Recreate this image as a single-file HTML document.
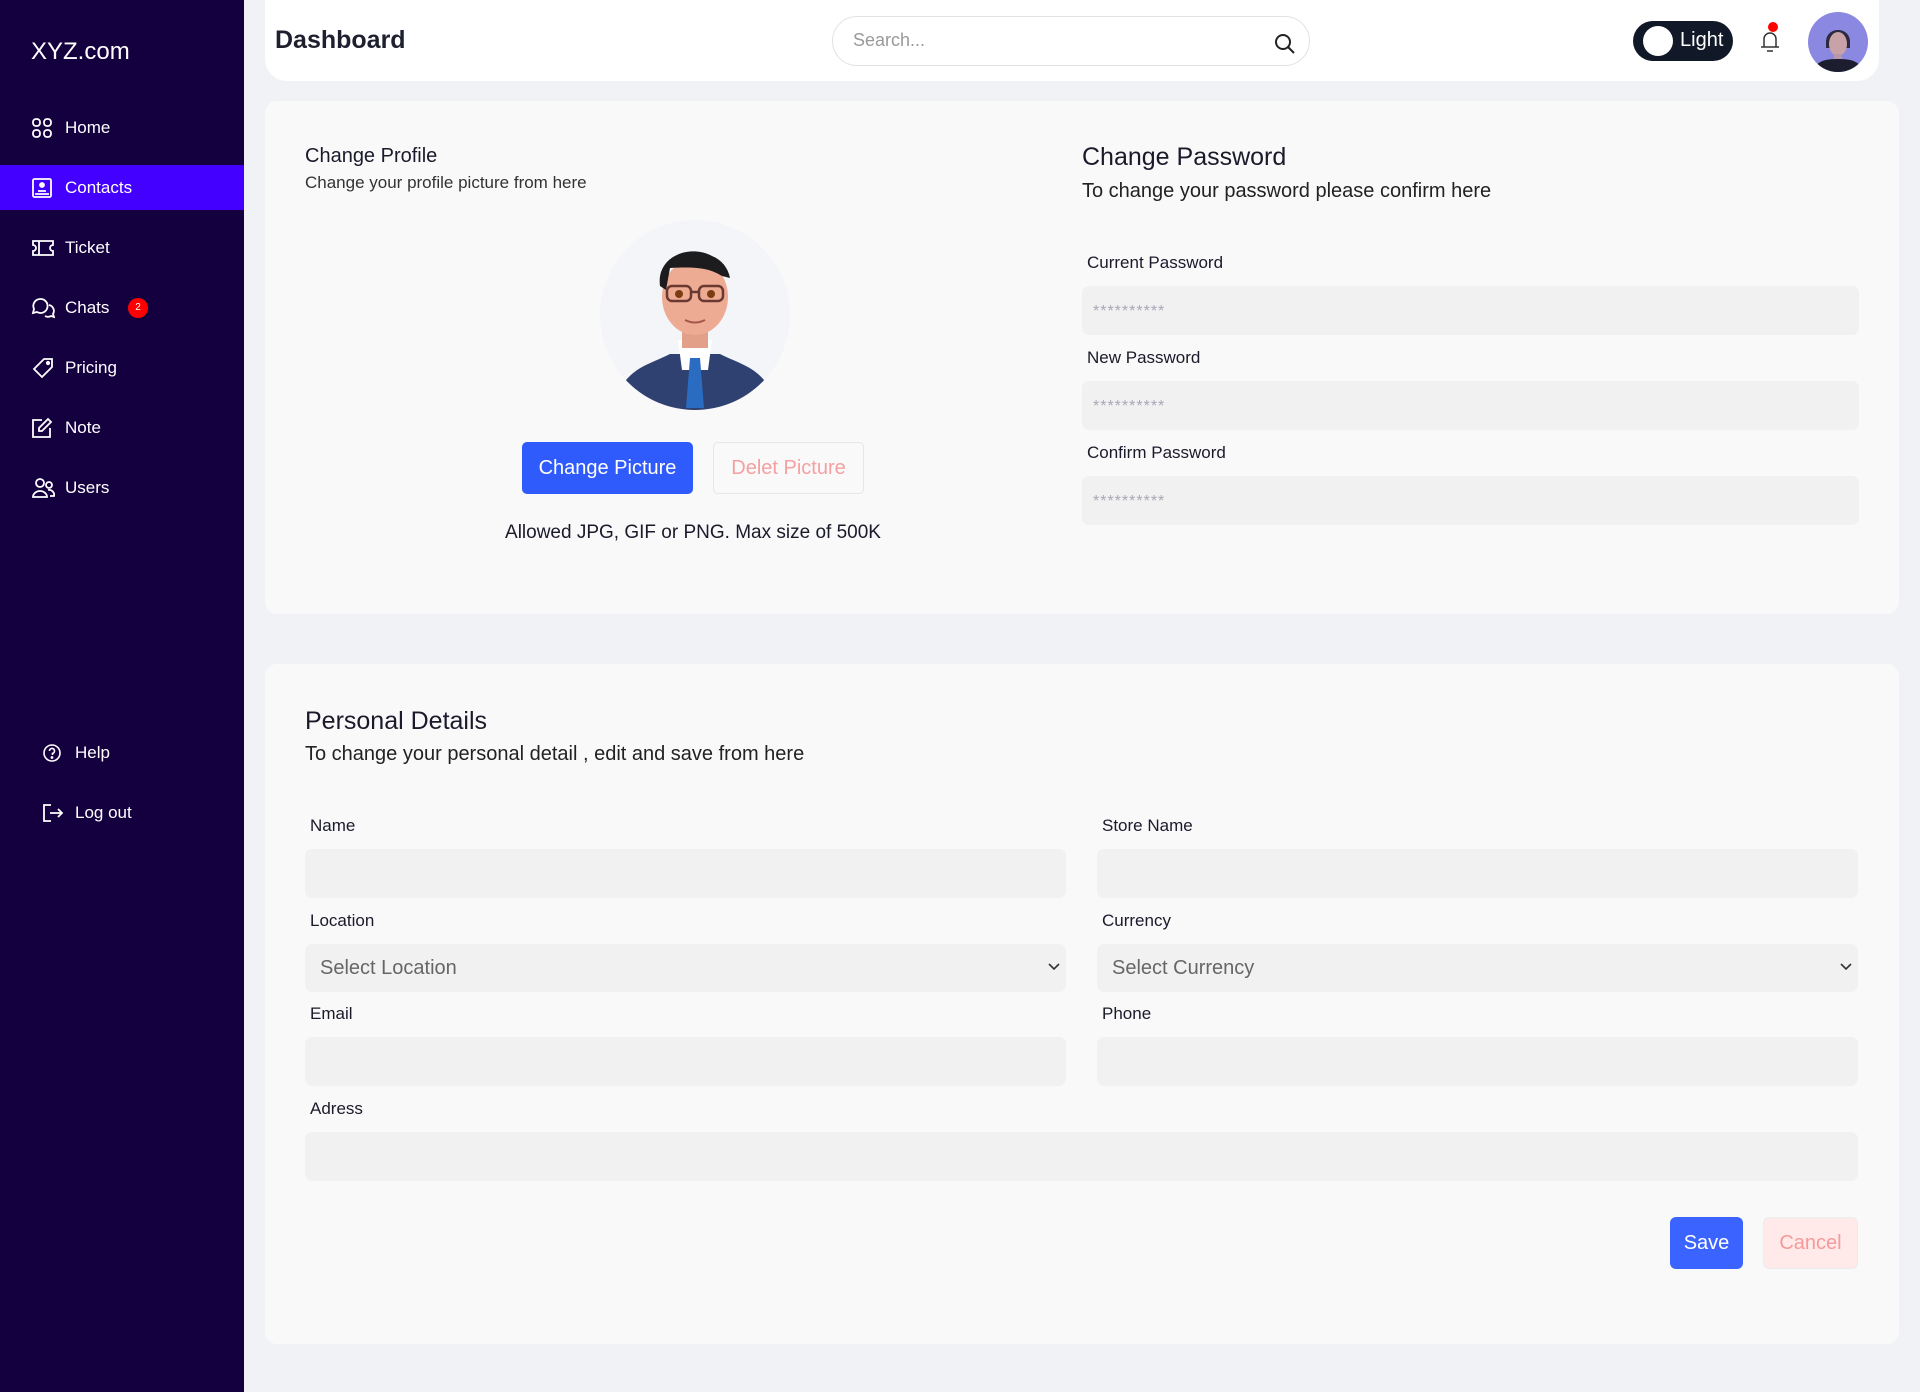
<!DOCTYPE html>
<html><head><meta charset="utf-8"><style>
*{box-sizing:border-box;margin:0;padding:0}
body{width:1920px;height:1392px;background:#f1f2f6;font-family:"Liberation Sans",sans-serif;position:relative;overflow:hidden;color:#1a1a2a}
.abs{position:absolute}
.side{left:0;top:0;width:244px;height:1392px;background:#14003f}
.logo{left:31px;top:38px;color:#fff;font-size:24px}
.nav{left:0;width:244px;height:45px;display:flex;align-items:center;color:#fff;font-size:17px}
.nav svg{position:absolute;left:31px}
.nav span{position:absolute;left:65px}
.act{background:#4400ff}
.card{background:#f9f9fa;border-radius:12px}
.inp{background:#f1f1f1;border-radius:7px;height:49px}
.lbl{font-size:17px;color:#1a1a2a}
.pw{color:#a8a8b8;font-size:16px;padding:17px 11px;letter-spacing:1px}
.sel{display:flex;align-items:center;padding-left:15px;font-size:20px;color:#666}
</style></head><body>
<div class="abs side"></div>
<div class="abs logo">XYZ.com</div>
<div class="abs nav" style="top:105px"><svg width="22" height="22" viewBox="0 0 22 22" fill="none" stroke="#fff" stroke-width="1.8"><rect x="2" y="2" width="7" height="7" rx="3"/><rect x="13" y="2" width="7" height="7" rx="3"/><rect x="2" y="13" width="7" height="7" rx="3"/><rect x="13" y="13" width="7" height="7" rx="3"/></svg><span>Home</span></div>
<div class="abs nav act" style="top:165px"><svg width="22" height="22" viewBox="0 0 22 22" fill="none" stroke="#fff" stroke-width="1.8"><rect x="2" y="2" width="18" height="18" rx="1.5"/><circle cx="11" cy="8" r="2" fill="#fff"/><path d="M7 14h8M4 17h14"/></svg><span>Contacts</span></div>
<div class="abs nav" style="top:225px"><svg width="24" height="22" viewBox="0 0 24 22" fill="none" stroke="#fff" stroke-width="1.8"><path d="M2 4h20v4a3 3 0 0 0 0 6v4H2v-4a3 3 0 0 0 0-6z"/><path d="M8 4v14"/></svg><span>Ticket</span></div>
<div class="abs nav" style="top:285px"><svg width="24" height="24" viewBox="0 0 24 24" fill="none" stroke="#fff" stroke-width="1.8"><path d="M9 3a7 7 0 0 0-6 10l-1 4 4-1a7 7 0 1 0 3-13z"/><path d="M14 20a6 6 0 0 0 6 0l3 1-1-3a6 6 0 0 0-4-9"/></svg><span>Chats</span><div class="abs" style="left:128px;top:13px;width:20px;height:20px;border-radius:50%;background:#f00;font-size:10px;text-align:center;line-height:20px">2</div></div>
<div class="abs nav" style="top:345px"><svg width="24" height="24" viewBox="0 0 24 24" fill="none" stroke="#fff" stroke-width="1.8"><path d="M13 3h8v8L11 21 3 13z"/><circle cx="17" cy="7" r="1.2"/></svg><span>Pricing</span></div>
<div class="abs nav" style="top:405px"><svg width="22" height="22" viewBox="0 0 22 22" fill="none" stroke="#fff" stroke-width="1.8"><path d="M11 3H2v17h17v-9"/><path d="M17 2l3 3-9 9H8v-3z"/></svg><span>Note</span></div>
<div class="abs nav" style="top:465px"><svg width="24" height="22" viewBox="0 0 24 22" fill="none" stroke="#fff" stroke-width="1.8"><circle cx="9" cy="6" r="4"/><path d="M2 20a7 6 0 0 1 14 0z"/><circle cx="18" cy="8" r="3"/><path d="M17 13a5 5 0 0 1 6 6h-4"/></svg><span>Users</span></div>
<div class="abs nav" style="top:730px"><svg style="left:42px" width="20" height="20" viewBox="0 0 20 20" fill="none" stroke="#fff" stroke-width="1.6"><circle cx="10" cy="10" r="8"/><path d="M7.5 8a2.5 2.5 0 1 1 3 2.4V12"/><circle cx="10" cy="14.5" r=".6" fill="#fff"/></svg><span style="left:75px">Help</span></div>
<div class="abs nav" style="top:790px"><svg style="left:42px" width="22" height="20" viewBox="0 0 22 20" fill="none" stroke="#fff" stroke-width="1.8"><path d="M9 2H2v16h7M8 10h12M16 6l4 4-4 4"/></svg><span style="left:75px">Log out</span></div>

<div class="abs" style="left:265px;top:0;width:1614px;height:81px;background:#fff;border-radius:0 0 22px 22px"></div>
<div class="abs" style="left:275px;top:26px;font-size:25px;font-weight:bold;color:#1e2030">Dashboard</div>
<div class="abs" style="left:832px;top:16px;width:478px;height:50px;border:1px solid #e2e2e6;border-radius:25px;background:#fff"></div>
<div class="abs" style="left:853px;top:30px;font-size:18px;color:#999">Search...</div>
<svg class="abs" style="left:1274px;top:33px" width="22" height="22" viewBox="0 0 22 22" fill="none" stroke="#222" stroke-width="2"><circle cx="9" cy="9" r="7"/><path d="M14 14l6 6"/></svg>
<div class="abs" style="left:1633px;top:21px;width:100px;height:40px;border-radius:20px;background:#111827"></div>
<div class="abs" style="left:1643px;top:26px;width:30px;height:30px;border-radius:50%;background:#fff"></div>
<div class="abs" style="left:1680px;top:29px;font-size:20px;color:#fff">Light</div>
<svg class="abs" style="left:1756px;top:26px" width="28" height="28" viewBox="0 0 28 28" fill="none" stroke="#333" stroke-width="1.5"><path d="M8 21V13a6 6 0 0 1 12 0v8zM5 21h18M11 25h6"/></svg>
<div class="abs" style="left:1768px;top:22px;width:10px;height:10px;border-radius:50%;background:#f00"></div>
<svg class="abs" style="left:1808px;top:12px" width="60" height="60" viewBox="0 0 60 60"><defs><clipPath id="c"><circle cx="30" cy="30" r="30"/></clipPath></defs><g clip-path="url(#c)"><rect width="60" height="60" fill="#8a88e0"/><path d="M18 30c0-16 24-16 24 0v6H18z" fill="#2b2a40"/><ellipse cx="30" cy="32" rx="9" ry="12" fill="#c9a2a8"/><rect x="26" y="42" width="8" height="8" fill="#b898a8"/><path d="M5 60c3-12 14-13 25-13s22 1 25 13z" fill="#1c1e30"/></g></svg>

<div class="abs card" style="left:265px;top:101px;width:1634px;height:513px"></div>
<div class="abs" style="left:305px;top:145px;font-size:20px">Change Profile</div>
<div class="abs" style="left:305px;top:173px;font-size:17px;color:#333">Change your profile picture from here</div>
<svg class="abs" style="left:600px;top:220px" width="190" height="190" viewBox="0 0 190 190"><defs><clipPath id="a"><circle cx="95" cy="95" r="95"/></clipPath></defs><g clip-path="url(#a)"><rect width="190" height="190" fill="#f4f5f8"/><path d="M20 170c10-22 30-26 50-36h50c20 10 40 14 50 36v30H20z" fill="#2f4170"/><path d="M78 120h34l-4 30H82z" fill="#fff"/><path d="M90 138h10l4 50H86z" fill="#2a6cc2"/><rect x="82" y="100" width="26" height="28" fill="#e3a089"/><ellipse cx="95" cy="77" rx="33" ry="38" fill="#eeab94"/><path d="M60 66c-4-30 30-42 52-30 10 4 16 12 18 22l-8-2c-10-6-20-10-52-8l-4 22z" fill="#1c1c1e"/><g fill="none" stroke="#6a3a30" stroke-width="2.5"><rect x="67" y="66" width="24" height="15" rx="5"/><rect x="99" y="66" width="24" height="15" rx="5"/><path d="M91 72h8"/></g><circle cx="79" cy="74" r="4" fill="#7a3d10"/><circle cx="111" cy="74" r="4" fill="#7a3d10"/><path d="M85 100q10 5 20 0" stroke="#a5584a" stroke-width="2" fill="none"/></g></svg>
<div class="abs" style="left:522px;top:442px;width:171px;height:52px;background:#2f5bfd;border-radius:5px;color:#fff;font-size:20px;text-align:center;line-height:52px">Change Picture</div>
<div class="abs" style="left:713px;top:442px;width:151px;height:52px;border:1px solid #e6e6e6;border-radius:5px;color:#f5a0a0;font-size:20px;text-align:center;line-height:50px">Delet Picture</div>
<div class="abs" style="left:445px;top:522px;width:496px;text-align:center;font-size:19px">Allowed JPG, GIF or PNG. Max size of 500K</div>

<div class="abs" style="left:1082px;top:143px;font-size:25px">Change Password</div>
<div class="abs" style="left:1082px;top:180px;font-size:20px;color:#222">To change your password please confirm here</div>
<div class="abs lbl" style="left:1087px;top:253px">Current Password</div>
<div class="abs inp pw" style="left:1082px;top:286px;width:777px">**********</div>
<div class="abs lbl" style="left:1087px;top:348px">New Password</div>
<div class="abs inp pw" style="left:1082px;top:381px;width:777px">**********</div>
<div class="abs lbl" style="left:1087px;top:443px">Confirm Password</div>
<div class="abs inp pw" style="left:1082px;top:476px;width:777px">**********</div>

<div class="abs card" style="left:265px;top:664px;width:1634px;height:680px"></div>
<div class="abs" style="left:305px;top:707px;font-size:25px">Personal Details</div>
<div class="abs" style="left:305px;top:743px;font-size:20px;color:#222">To change your personal detail , edit and save from here</div>
<div class="abs lbl" style="left:310px;top:816px">Name</div>
<div class="abs inp" style="left:305px;top:849px;width:761px"></div>
<div class="abs lbl" style="left:1102px;top:816px">Store Name</div>
<div class="abs inp" style="left:1097px;top:849px;width:761px"></div>
<div class="abs lbl" style="left:310px;top:911px">Location</div>
<div class="abs inp sel" style="left:305px;top:944px;width:761px;height:48px">Select Location</div>
<svg class="abs" style="left:1048px;top:963px" width="12" height="8"><path d="M1 1l5 5 5-5" stroke="#333" stroke-width="1.6" fill="none"/></svg>
<div class="abs lbl" style="left:1102px;top:911px">Currency</div>
<div class="abs inp sel" style="left:1097px;top:944px;width:761px;height:48px">Select Currency</div>
<svg class="abs" style="left:1840px;top:963px" width="12" height="8"><path d="M1 1l5 5 5-5" stroke="#333" stroke-width="1.6" fill="none"/></svg>
<div class="abs lbl" style="left:310px;top:1004px">Email</div>
<div class="abs inp" style="left:305px;top:1037px;width:761px"></div>
<div class="abs lbl" style="left:1102px;top:1004px">Phone</div>
<div class="abs inp" style="left:1097px;top:1037px;width:761px"></div>
<div class="abs lbl" style="left:310px;top:1099px">Adress</div>
<div class="abs inp" style="left:305px;top:1132px;width:1553px"></div>
<div class="abs" style="left:1670px;top:1217px;width:73px;height:52px;background:#3b63ff;border-radius:6px;color:#fff;font-size:20px;text-align:center;line-height:52px">Save</div>
<div class="abs" style="left:1763px;top:1217px;width:95px;height:52px;background:#ffe9e9;border:1px solid #ececec;border-radius:6px;color:#f59a9a;font-size:20px;text-align:center;line-height:50px">Cancel</div>
</body></html>
